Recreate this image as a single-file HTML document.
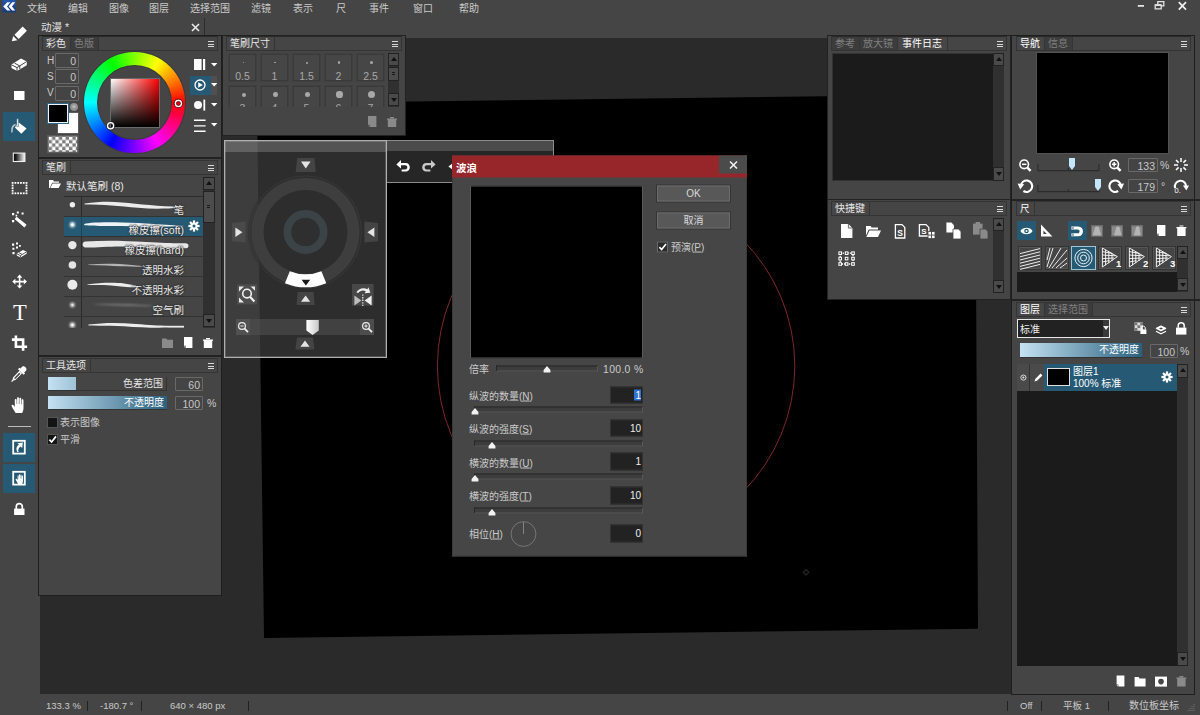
<!DOCTYPE html>
<html lang="zh-CN">
<head>
<meta charset="utf-8">
<title>动漫</title>
<style>
*{box-sizing:border-box;margin:0;padding:0}
html,body{width:1200px;height:715px;overflow:hidden;background:#2a2a2a}
body{font-family:"Liberation Sans","Noto Sans CJK SC",sans-serif;font-size:10px;color:#cacaca;line-height:1}
#app{position:relative;width:1200px;height:715px;overflow:hidden;background:#2a2a2a}
.a{position:absolute}
.t{position:absolute;white-space:nowrap;line-height:12px;font-size:10px}
.w{color:#fff}
.g{color:#8c8c8c}
.panel{position:absolute;background:#454545;border:1px solid #1e1e1e}
.hdr{position:absolute;height:15px;background:#454545;border:1px solid #343434}
.tab{position:absolute;top:0;bottom:0;display:flex;align-items:center;line-height:12px;font-size:10px;padding:0 4px 0 3px;border-right:1px solid #343434;color:#e8e8e8;background:#464646;white-space:nowrap}
.tab.off{color:#808080;background:#3c3c3c}
.hm{position:absolute;right:3px;bottom:2.6px;width:6.4px;height:6.4px;background:repeating-linear-gradient(to bottom,#d8d8d8 0,#d8d8d8 1.3px,transparent 1.3px,transparent 2.55px)}
.hm i{display:none}
.box{position:absolute;background:#444;border:1px solid #696969;border-radius:1px;color:#c8c8c8;text-align:right;font-size:10.5px;line-height:12px;padding-right:2px;padding-top:0.6px}
.sb{position:absolute;background:#3a3a3a}
.sbb{position:absolute;width:11px;height:13px;background:#4a4a4a;border:1px solid #222}
.sbb:after{content:"";position:absolute;left:1.5px;top:3px;border-left:3px solid transparent;border-right:3px solid transparent}
.sbb.up:after{border-bottom:4.5px solid #111}
.sbb.dn:after{border-top:4.5px solid #111;top:4px}
.cell{position:absolute;width:27px;height:27px;background:#464646;border:1px solid #3a3a3a;box-shadow:0 0 0 1px rgba(58,58,58,0.45)}
.cell i{position:absolute;border-radius:50%;background:#a8a8a8}
.cell b{position:absolute;left:0;width:25px;top:14.5px;text-align:center;font-weight:normal;font-size:10.5px;line-height:12px;color:#a8a8a8}
.btn{width:73px;height:15.5px;background:#585858;border:1px solid #6c6c6c;box-shadow:0 0 0 1px #333;text-align:center;font-size:10px;line-height:14px;color:#d8d8d8}
.inp{position:absolute;width:33px;height:17.5px;background:#222;border:1px solid #333;text-align:right;font-size:10px;line-height:13px;padding:1px 1px 0 0;color:#eee}
.trk{position:absolute;height:6px;background:#3d3d3d;border:1px solid #272727;border-bottom-color:#585858;border-right-color:#585858}
.blue{background:#265a74}
.bn{text-shadow:0 0 1px #333,0 0 2px #333,0 0 2px #333}
svg{position:absolute;overflow:visible}
</style>
</head>
<body>
<div id="app">

<!-- ===== canvas area ===== -->
<svg class="a" style="left:0;top:0" width="1200" height="715" viewBox="0 0 1200 715">
  <polygon points="257,103.4 975,94.4 978,628.7 264,638" fill="#000"/>
  <circle cx="616.1" cy="366" r="178.7" fill="none" stroke="#8a2c2c" stroke-width="0.9"/>
  <path d="M806 569.4 l2.9 2.8 l-2.9 2.8 l-2.9 -2.8 z" fill="none" stroke="#262626" stroke-width="1.1"/>
</svg>

<!-- ===== top menu ===== -->
<div class="a" id="menubar" style="left:0;top:0;width:1200px;height:38px;background:#454545">
  <svg style="left:0;top:0" width="18" height="14" viewBox="0 0 18 14"><defs><linearGradient id="lg" x1="0" x2="0" y1="0" y2="1"><stop offset="0" stop-color="#2458ae"/><stop offset="1" stop-color="#163a7c"/></linearGradient></defs><rect x="2.4" y="0" width="13.4" height="12.4" fill="url(#lg)"/><path d="M3.2 6.4L7.2 2.2H10.4L7 6.4L10.4 10.4H7.2Z M8.6 6.4L12.2 2.2H15.2L12 6.4L15.2 10.4H12.2Z" fill="#fff"/></svg>
  <span class="t" style="left:27px;top:3px">文档</span>
  <span class="t" style="left:68px;top:3px">编辑</span>
  <span class="t" style="left:109px;top:3px">图像</span>
  <span class="t" style="left:149px;top:3px">图层</span>
  <span class="t" style="left:190px;top:3px">选择范围</span>
  <span class="t" style="left:251px;top:3px">滤镜</span>
  <span class="t" style="left:293px;top:3px">表示</span>
  <span class="t" style="left:336px;top:3px">尺</span>
  <span class="t" style="left:369px;top:3px">事件</span>
  <span class="t" style="left:413px;top:3px">窗口</span>
  <span class="t" style="left:459px;top:3px">帮助</span>
  <svg style="left:1135px;top:0px" width="56" height="12" viewBox="1135 0 56 12">
    <rect x="1137.8" y="5" width="6.2" height="1.8" fill="#e0e0e0"/>
    <path d="M1155.2 4.8h6v4h-6z M1157.8 4.4v-2.8h6v4.2h-2.4" fill="none" stroke="#e4e4e4" stroke-width="1.3"/><path d="M1155.2 5.2h6" stroke="#e4e4e4" stroke-width="1.6"/>
    <path d="M1178.8 2.2l7.2 7.4M1186 2.2l-7.2 7.4" stroke="#f0f0f0" stroke-width="1.7"/>
  </svg>
</div>
<div class="a" id="doctab" style="left:38px;top:18px;width:167px;height:18px;border-right:1px solid #2c2c2c">
  <span class="t" style="left:3px;top:3px;font-size:10.5px;color:#e0e0e0">动漫 *</span>
  <svg style="left:153px;top:5px" width="9" height="9" viewBox="0 0 9 9"><path d="M1 1l7 7M8 1l-7 7" stroke="#e8e8e8" stroke-width="1.6"/></svg>
</div>

<!-- ===== left tool column ===== -->
<div class="a" id="toolcol" style="left:0;top:38px;width:39.5px;height:656px;background:#454545"></div>
<div class="a blue" style="left:3px;top:112px;width:32px;height:29px"></div>
<div class="a blue" style="left:3px;top:433px;width:32px;height:29px"></div>
<div class="a blue" style="left:3px;top:464px;width:32px;height:29px"></div>
<i class="a" style="left:8px;top:426px;width:23px;height:1px;background:#bbb"></i>
<svg id="tools" style="left:0;top:0" width="38" height="715" viewBox="0 0 38 715" fill="#fff">
  <!-- pen -->
  <path d="M14.5 34.7 L22.7 26.5 L26.9 30.7 L18.7 38.9Z"/><path d="M13.2 36 L17.4 40.2 L11.9 41.3Z"/>
  <!-- eraser -->
  <g transform="translate(19,64)"><path d="M-7.5 0.5 L2 -5.6 L7.8 -2.6 L7.8 1.2 L-2 7 L-7.5 4Z"/><path d="M-7.5 0.8 L-2 3.6 L7.6 -2.4 M-2 3.6 V7 M-4.6 -1 L0.8 2 L0.8 5" stroke="#454545" stroke-width="1" fill="none"/></g>
  <!-- rect -->
  <rect x="14" y="91" width="10.5" height="9"/>
  <!-- bucket -->
  <path d="M18.4 122.3 L26.6 128.4 L21.3 133.8 L14.9 127.5Z"/><path d="M16.8 118.8h1.7v7.8h-1.7z" stroke="#265a74" stroke-width="0.5"/><path d="M15.6 124.6 C12.6 125.4 11.6 127.6 12 132.4" fill="none" stroke="#b8c6ce" stroke-width="1.6"/>
  <!-- gradient -->
  <defs><linearGradient id="gbw" x1="0" x2="1" y1="0" y2="0"><stop offset="0" stop-color="#000"/><stop offset="0.25" stop-color="#222"/><stop offset="1" stop-color="#fff"/></linearGradient></defs>
  <rect x="13.3" y="153.1" width="11.6" height="8.4" fill="url(#gbw)" stroke="#f0f0f0" stroke-width="1.1"/>
  <!-- dotted select -->
  <rect x="11.70" y="182" width="1.8" height="1.8"/><rect x="11.70" y="192.4" width="1.8" height="1.8"/><rect x="14.48" y="182" width="1.8" height="1.8"/><rect x="14.48" y="192.4" width="1.8" height="1.8"/><rect x="17.26" y="182" width="1.8" height="1.8"/><rect x="17.26" y="192.4" width="1.8" height="1.8"/><rect x="20.04" y="182" width="1.8" height="1.8"/><rect x="20.04" y="192.4" width="1.8" height="1.8"/><rect x="22.82" y="182" width="1.8" height="1.8"/><rect x="22.82" y="192.4" width="1.8" height="1.8"/><rect x="25.60" y="182" width="1.8" height="1.8"/><rect x="25.60" y="192.4" width="1.8" height="1.8"/><rect x="11.7" y="184.60" width="1.8" height="1.8"/><rect x="25.6" y="184.60" width="1.8" height="1.8"/><rect x="11.7" y="187.20" width="1.8" height="1.8"/><rect x="25.6" y="187.20" width="1.8" height="1.8"/><rect x="11.7" y="189.80" width="1.8" height="1.8"/><rect x="25.6" y="189.80" width="1.8" height="1.8"/>
  <!-- magic wand -->
  <g transform="translate(19,219)"><path d="M-2.4 -2.2 L7.6 5.8 L5.4 8.4 L-4.4 0Z"/><path d="M-7 -6h2.2v2.2h-2.2z M-2.2 -7.6h2v2h-2z M2.6 -6.6h2v2h-2z M-7 1h2.2v2.2h-2.2z M-3.4 -4.2h1.6v1.6h-1.6z"/></g>
  <!-- select eraser -->
  <g transform="translate(19,250)"><path d="M-7 -6.4h2.2v2.2h-2.2z M-3 -7.6h2v2h-2z M-6.6 -2.2h2v2h-2z M-3 -3.4h2v2h-2z M-6.6 2h2.2v2.2h-2.2z M0 -5h1.8v1.8h-1.8z"/><path d="M-2.2 3.6 L4 0 L7.6 1.8 L7.6 3.8 L1.4 7.4 L-2.2 5.6Z"/><path d="M-2 3.8 L1.4 5.6 L7.4 2 M1.4 5.6V7.4 M0 2.6 L3 4.4" stroke="#454545" stroke-width="0.9" fill="none"/></g>
  <!-- move -->
  <g transform="translate(19.6,281.6)"><path d="M0 -7 L2.8 -3.8 H0.8 V-0.8 H4.2 V-2.8 L7.4 0 L4.2 2.8 V0.8 H0.8 V3.8 H2.8 L0 7 L-2.8 3.8 H-0.8 V0.8 H-4.2 V2.8 L-7.4 0 L-4.2 -2.8 V-0.8 H-0.8 V-3.8 H-2.8Z"/></g>
  <!-- T -->
  <text x="19.8" y="320" text-anchor="middle" font-family="Liberation Serif,serif" font-size="22.5" fill="#fff">T</text>
  <!-- crop -->
  <g transform="translate(19.5,343.2)" fill="none" stroke="#fff" stroke-width="2.6"><path d="M-3.6 -7.6 V3.6 H7.6 M-7.6 -3.6 H3.6 V7.6"/></g>
  <!-- eyedropper -->
  <g transform="translate(19,374)"><path d="M3.4 -7.4 C5.4 -8.6 8.4 -5.6 7.2 -3.6 L5.2 -1.6 L6 -0.6 L4.6 0.8 L-1 -4.8 L0.4 -6.2 L1.4 -5.4Z"/><path d="M0.4 -3.2 L3 -0.6 L-3.6 6 L-5.6 6.6 L-7 8 L-7.8 7.2 L-6.4 5.6 L-6 3.6Z M0.2 -1.2 L-4.6 3.8 L-4.4 5 L-3.4 4.8 L1.4 -0.2Z" fill-rule="evenodd"/></g>
  <!-- hand -->
  <g transform="translate(19,405)"><path d="M-3.4 8 C-4.6 5.4 -6.6 3.4 -7.4 1 C-7.6 -0.4 -6 -0.8 -5.2 0.4 L-4.2 2 V-5 C-4.2 -6.4 -2.4 -6.4 -2.4 -5 V-1 H-1.9 V-6.8 C-1.9 -8.2 -0.1 -8.2 -0.1 -6.8 V-1 H0.4 V-6.2 C0.4 -7.6 2.2 -7.6 2.2 -6.2 V-0.6 H2.7 V-4.6 C2.7 -6 4.5 -6 4.5 -4.6 V3 C4.5 5 3.8 6.4 3.2 8Z"/></g>
  <!-- shortcut doc icon -->
  <g transform="translate(19,447.2)"><rect x="-5.8" y="-6.4" width="11.6" height="12.8" fill="none" stroke="#fff" stroke-width="1.8"/><path d="M-1.6 4.8 C-3.4 2 -2.6 -1 0 -2.4 L-1.6 -4 L3.8 -4.6 L3.2 0.8 L1.6 -0.8 C-0.4 0.6 -1.4 2.4 -0.4 4.8Z"/></g>
  <!-- hand doc icon -->
  <g transform="translate(19,478.2)"><rect x="-5.8" y="-6.4" width="11.6" height="12.8" fill="none" stroke="#fff" stroke-width="1.8"/><g transform="translate(1.2,0.8) scale(0.62)"><path d="M-3.4 8 C-4.6 5.4 -6.6 3.4 -7.4 1 C-7.6 -0.4 -6 -0.8 -5.2 0.4 L-4.2 2 V-5 C-4.2 -6.4 -2.4 -6.4 -2.4 -5 V-1 H-1.9 V-6.8 C-1.9 -8.2 -0.1 -8.2 -0.1 -6.8 V-1 H0.4 V-6.2 C0.4 -7.6 2.2 -7.6 2.2 -6.2 V-0.6 H2.7 V-4.6 C2.7 -6 4.5 -6 4.5 -4.6 V3 C4.5 5 3.8 6.4 3.2 8Z"/></g></g>
  <!-- lock -->
  <g transform="translate(19.3,509)"><rect x="-5.2" y="-0.4" width="10.4" height="6.4"/><path d="M-3 0 V-2.4 C-3 -6.4 3 -6.4 3 -2.4 V0" fill="none" stroke="#fff" stroke-width="1.7"/></g>
</svg>

<div class="a" style="left:1195px;top:38px;width:5px;height:660px;background:#454545"></div>
<!-- ===== status bar ===== -->
<div class="a" id="status" style="left:0;top:694px;width:1200px;height:21px;background:#454545;font-size:9.5px">
  <span class="t" style="left:46px;top:6px;font-size:9.5px">133.3 %</span>
  <i class="a" style="left:87px;top:7px;width:1px;height:10px;background:#222"></i>
  <span class="t" style="left:100px;top:6px;font-size:9.5px">-180.7 °</span>
  <i class="a" style="left:141px;top:7px;width:1px;height:10px;background:#222"></i>
  <span class="t" style="left:170px;top:6px;font-size:9.5px">640 × 480 px</span>
  <i class="a" style="left:248px;top:7px;width:1px;height:10px;background:#222"></i>
  <i class="a" style="left:1007px;top:7px;width:1px;height:10px;background:#222"></i>
  <span class="t" style="left:1020px;top:6px;font-size:9.5px">Off</span>
  <i class="a" style="left:1041px;top:7px;width:1px;height:10px;background:#222"></i>
  <span class="t" style="left:1063px;top:6px;font-size:9.5px">平板 1</span>
  <i class="a" style="left:1108px;top:7px;width:1px;height:10px;background:#222"></i>
  <span class="t" style="left:1129px;top:6px;font-size:10px">数位板坐标</span>
  <svg style="left:1187px;top:9px" width="8" height="8" viewBox="0 0 8 8"><path d="M7 1v1M7 3v1M5 3v1M7 5v1M5 5v1M3 5v1M7 7v1M5 7v1M3 7v1M1 7v1" stroke="#777" stroke-width="1"/></svg>
</div>

<!-- ===== left docked panel ===== -->
<div class="panel" id="leftpanel" style="left:38px;top:35px;width:184px;height:561px">
 <!-- coordinates inside are relative to (39,36) -->
 <div class="hdr" style="left:3px;top:0px;width:176px;height:15px;border-top-color:#2a2a2a"><span class="tab" style="left:0">彩色</span><span class="tab off" style="left:28px">色版</span><span class="hm"><i></i><i></i><i></i></span></div>
 <span class="t" style="left:8px;top:19px;font-size:10px">H</span><div class="box" style="left:16px;top:17px;width:24px;height:15px;line-height:13px;padding-top:1px">0</div>
 <span class="t" style="left:8px;top:35px;font-size:10px">S</span><div class="box" style="left:16px;top:33px;width:24px;height:15px;line-height:13px;padding-top:1px">0</div>
 <span class="t" style="left:8px;top:51px;font-size:10px">V</span><div class="box" style="left:16px;top:49.5px;width:24px;height:15px;line-height:13px;padding-top:1px">0</div>
 <!-- swatches -->
 <div class="a" style="left:18px;top:76.3px;width:22px;height:21.4px;background:#fff;border:1.5px solid #5c5c5c"></div>
 <div class="a" style="left:9px;top:67.6px;width:20px;height:19.4px;background:#000;border:1px solid #eaf4fa;outline:1px solid #2f6787"></div>
 <div class="a" style="left:31px;top:66.6px;width:8.4px;height:8.4px;border-radius:50%;background:radial-gradient(circle at 50% 45%,#c8c8c8 0,#9a9a9a 35%,#777 100%)"></div>
 <svg style="left:8px;top:98.8px" width="32" height="19" viewBox="0 0 32 19"><defs><pattern id="chk" x="1.6" y="1.6" width="6.8" height="6.8" patternUnits="userSpaceOnUse"><rect width="6.8" height="6.8" fill="#fff"/><rect x="3.4" width="3.4" height="3.4" fill="#7c7c7c"/><rect y="3.4" width="3.4" height="3.4" fill="#7c7c7c"/></pattern></defs><rect x="0.85" y="0.85" width="30.1" height="16.6" fill="url(#chk)" stroke="#5c5c5c" stroke-width="1.5"/></svg>
 <!-- colour wheel -->
 <div class="a" style="left:45px;top:16px;width:101px;height:101px;border-radius:50%;background:conic-gradient(from 90deg,#ff0000,#ff00ff,#0000ff,#00ffff,#00ff00,#ffff00,#ff0000);box-shadow:0 0 0 1px #3a3a3a"></div>
 <div class="a" style="left:59px;top:30px;width:73px;height:73px;border-radius:50%;background:#454545;box-shadow:0 0 0 1px #3a3a3a"></div>
 <div class="a" style="left:70.5px;top:42px;width:50px;height:49.5px;border:1px solid #6a6a6a;background:linear-gradient(to bottom,rgba(0,0,0,0),#000),linear-gradient(to right,#fff,#f00)"></div>
 <svg style="left:0;top:0" width="184" height="130" viewBox="0 0 184 130"><g fill="none"><circle cx="139.4" cy="67.4" r="3.1" stroke="#fff" stroke-width="1.7"/><circle cx="139.4" cy="67.4" r="4.3" stroke="#222" stroke-width="0.8"/><circle cx="139.4" cy="67.4" r="1.9" stroke="#222" stroke-width="0.7"/><circle cx="71.6" cy="89.8" r="3.1" stroke="#fff" stroke-width="1.7"/><circle cx="71.6" cy="89.8" r="4.3" stroke="#222" stroke-width="0.8"/><circle cx="71.6" cy="89.8" r="1.9" stroke="#222" stroke-width="0.7"/></g></svg>
 <!-- right icon column -->
 <div class="a blue" style="left:151px;top:40px;width:21px;height:19px"></div><div class="a" style="left:172px;top:40px;width:6px;height:19px;background:#505050"></div>
 <svg style="left:150px;top:20px" width="32" height="80" viewBox="0 0 32 80" fill="#fff">
   <rect x="5" y="3" width="7.6" height="11"/><rect x="14" y="3" width="2.2" height="11"/><path d="M22 7h6.4l-3.2 3.4z"/>
   <circle cx="11" cy="29" r="5" fill="none" stroke="#fff" stroke-width="1.3"/><path d="M9.2 26.2l4.6 2.8l-4.6 2.8z"/><path d="M22 27h6.4l-3.2 3.4z"/>
   <circle cx="9" cy="49" r="4"/><rect x="14.4" y="43.6" width="1.8" height="11"/><path d="M22 47h6.4l-3.2 3.4z"/>
   <path d="M5 63.6h11.6v1.3h-11.6z M5 69.2h11.6v1.3h-11.6z M5 74.6h11.6v1.3h-11.6z"/><path d="M22 67h6.4l-3.2 3.4z"/>
 </svg>

 <!-- ===== brush panel ===== -->
 <i class="a" style="left:0;top:121px;width:182px;height:2px;background:#222"></i>
 <div class="hdr" style="left:3px;top:124px;width:176px"><span class="tab" style="left:0">笔刷</span><span class="hm"><i></i><i></i><i></i></span></div>
 <svg style="left:10px;top:143px" width="12" height="10" viewBox="0 0 12 10"><path d="M0 1h4l1 1.4h5v1.4H3.2L0.8 9H0z" fill="#fff"/><path d="M3.6 4.6H12L9.6 9H1.4z" fill="#fff"/></svg>
 <span class="t" style="left:27px;top:144px;font-size:10.5px;color:#e8e8e8">默认笔刷 (8)</span>
 <div class="a" id="brushlist" style="left:25px;top:160px;width:140px;height:132px;overflow:hidden">
   <i class="a" style="left:17px;top:0;width:1px;height:132px;background:#2a2a2a"></i>
   <i class="a" style="left:-20px;top:0;width:160px;height:1px;background:#2c2c2c"></i>
   <i class="a" style="left:0;top:20px;width:140px;height:1px;background:#333"></i>
   <div class="a blue" style="left:0;top:21px;width:140px;height:19px"></div>
   <i class="a" style="left:17px;top:21px;width:1px;height:19px;background:#1d4558"></i>
   <i class="a" style="left:0;top:40px;width:140px;height:1px;background:#333"></i>
   <i class="a" style="left:0;top:60px;width:140px;height:1px;background:#333"></i>
   <i class="a" style="left:0;top:80px;width:140px;height:1px;background:#333"></i>
   <i class="a" style="left:0;top:100px;width:140px;height:1px;background:#333"></i>
   <i class="a" style="left:0;top:120px;width:140px;height:1px;background:#333"></i>
   <svg style="left:0;top:0" width="140" height="132" viewBox="0 0 140 132">
     <defs><filter id="bl1" x="-50%" y="-50%" width="200%" height="200%"><feGaussianBlur stdDeviation="0.9"/></filter><filter id="bl2" x="-50%" y="-50%" width="200%" height="200%"><feGaussianBlur stdDeviation="0.5"/></filter></defs>
     <circle cx="8.4" cy="8.8" r="2.7" fill="#eee"/>
     <path d="M20.6 7.4 C35 5.6 45 5.2 58 6.4 C75 8 95 10.2 117 10.7 L117 11.5 C100 13 88 13 74 11.8 C55 10 40 8.6 20.6 8.5Z" fill="#ececec"/>
     <circle cx="8.4" cy="28.7" r="2.6" fill="#eef6fa" filter="url(#bl1)"/><circle cx="8.4" cy="28.7" r="1.2" fill="#fff"/>
     <path d="M20 28.6 C20 26.4 40 25.8 58 26.4 C80 27 100 28.4 121 30 C100 31 80 30.8 58 30 C40 29.6 20 30.6 20 28.6Z" fill="#edf3f7" filter="url(#bl2)"/>
     <circle cx="8.4" cy="49.1" r="4.2" fill="#e8e8e8"/>
     <path d="M21.4 45.6 C40 44 60 44.6 82 46 C100 47 112 47.4 121.6 47.2 C125.4 47.2 125.6 52 122 52.2 C100 52.6 80 50.6 60 50.4 C45 50.2 35 51.4 21.6 51.6 C17.8 51.6 17.6 46 21.4 45.6Z" fill="#e8e8e8"/>
     <circle cx="8.4" cy="69" r="3.8" fill="#e4e4e4"/>
     <path d="M24.4 68.4 C40 67.2 55 67.6 68 69 C74 69.6 78 70.2 81 70.6 C70 71 55 69.8 24.4 68.9Z" fill="#b4b4b4" filter="url(#bl2)"/>
     <circle cx="8.4" cy="88.8" r="5" fill="#eaeaea"/>
     <path d="M23.4 88.6 C35 86.6 50 86.4 60 87.4 L72 89.4 L72 91.4 C60 91.6 50 89.4 40 89 C33 88.8 28 89 23.4 88.9Z" fill="#ececec"/>
     <circle cx="8.4" cy="109" r="2.4" fill="#ddd" filter="url(#bl1)"/><circle cx="8.4" cy="109" r="1" fill="#e8e8e8"/>
     <path d="M30 108.4 C50 107.4 75 108.6 92 110 C75 110.6 50 109.2 30 108.8Z" fill="#8a8a8a" filter="url(#bl1)"/>
     <circle cx="8.4" cy="129" r="2.7" fill="#e4e4e4" filter="url(#bl1)"/><circle cx="8.4" cy="129" r="1.3" fill="#f4f4f4"/>
     <path d="M24.4 128.6 C40 126.6 55 126.6 72 128 C85 129 95 129.6 104 129.8 L104 131.6 C90 132 75 131.4 60 130.2 C45 129.4 35 129.8 24.4 129.6Z" fill="#ececec"/>
     <path d="M104 129.8h16v1.8h-16z" fill="#ececec" stroke="#454545" stroke-width="0" stroke-dasharray="2 1"/>
   </svg>
   <span class="t bn" style="right:20px;top:8px;font-size:10.5px;color:#e8e8e8">笔</span>
   <span class="t bn" style="right:20px;top:28px;font-size:10.5px;color:#f0f0f0">橡皮擦(soft)</span>
   <span class="t bn" style="right:20px;top:48px;font-size:10.5px;color:#e8e8e8">橡皮擦(hard)</span>
   <span class="t bn" style="right:20px;top:68px;font-size:10.5px;color:#e8e8e8">透明水彩</span>
   <span class="t bn" style="right:20px;top:88px;font-size:10.5px;color:#e8e8e8">不透明水彩</span>
   <span class="t bn" style="right:20px;top:108px;font-size:10.5px;color:#e8e8e8">空气刷</span>
   <svg style="left:124px;top:24px" width="12" height="12" viewBox="-6 -6 12 12"><g fill="#fff"><circle r="3.6"/><g id="gt"><rect x="-1.1" y="-5.6" width="2.2" height="11.2"/></g><use href="#gt" transform="rotate(45)"/><use href="#gt" transform="rotate(90)"/><use href="#gt" transform="rotate(135)"/></g><circle r="1.5" fill="#265a74"/></svg>
 </div>
 <div class="sb" style="left:164px;top:141px;width:12px;height:151px;background:#303030"></div>
 <div class="sbb up" style="left:164px;top:141px;width:12px"></div>
 <div class="a" style="left:164px;top:155px;width:12px;height:32px;background:#4c4c4c;border:1px solid #222"><i class="a" style="left:3px;top:13px;width:3px;height:1px;background:#1a1a1a"></i><i class="a" style="left:3px;top:15px;width:3px;height:1px;background:#1a1a1a"></i></div>
 <div class="sbb dn" style="left:164px;top:278px;width:12px"></div>
 <svg style="left:122px;top:300px" width="56" height="14" viewBox="0 0 56 14">
   <path d="M1 2.4h4.4l1 1.4H12V12H1z" fill="#8a8a8a"/>
   <path d="M23 1h8.4v11h-6.6v-2.2H23z" fill="#fff"/><path d="M23 10.6h1.4V12z" fill="#fff"/>
   <path d="M42 3.6h10v1.2h-0.8V12H42.8V4.8H42z M45 2h4v1.2h-4z" fill="#fff"/>
 </svg>

 <!-- ===== tool options ===== -->
 <i class="a" style="left:0;top:319px;width:182px;height:2px;background:#222"></i>
 <div class="hdr" style="left:3px;top:322px;width:176px"><span class="tab" style="left:0">工具选项</span><span class="hm"><i></i><i></i><i></i></span></div>
 <div class="a" style="left:9px;top:341px;width:119px;height:14px;background:#454545;border-bottom:1px solid #333;border-right:1px solid #333"><i class="a" style="left:0;top:0;width:28px;height:13px;background:linear-gradient(to right,#c4e2f2,#9fc2d6)"></i><span class="t" style="right:3px;top:1px;font-size:10px;color:#e4e4e4">色差范围</span></div>
 <div class="box" style="left:136px;top:341px;width:28px;height:14px">60</div>
 <div class="a" style="left:9px;top:360px;width:119px;height:14px;background:linear-gradient(to right,#c4e2f2,#2a607e);border-bottom:1px solid #333"><span class="t" style="right:3px;top:1px;font-size:10px;color:#fff">不透明度</span></div>
 <div class="box" style="left:136px;top:360px;width:28px;height:14px">100</div>
 <span class="t" style="left:168px;top:361px;font-size:10.5px">%</span>
 <div class="a" style="left:8px;top:381px;width:11px;height:11px;background:#141414;border:1px solid #555"></div>
 <span class="t" style="left:21px;top:381px;font-size:10px">表示图像</span>
 <div class="a" style="left:8px;top:398px;width:11px;height:11px;background:#141414;border:1px solid #555"><svg style="left:0;top:0" width="9" height="9" viewBox="0 0 9 9"><path d="M1.4 4.6l2.2 2.4L8 1.4" stroke="#fff" stroke-width="1.7" fill="none"/></svg></div>
 <span class="t" style="left:21px;top:398px;font-size:10px">平滑</span>
</div>

<!-- ===== brush size floating panel ===== -->
<div class="panel" id="bsize" style="left:222px;top:35px;width:184px;height:101px;border-color:#222">
 <!-- inner origin (223,36) -->
 <div class="hdr" style="left:3px;top:0px;width:176px;height:15px;border-top-color:#2a2a2a"><span class="tab" style="left:0">笔刷尺寸</span><span class="hm"><i></i><i></i><i></i></span></div>
 <div class="a" style="left:4px;top:17px;width:161px;height:54px;overflow:hidden;color:#a8a8a8;font-size:10.5px">
   <div class="cell" style="left:2px;top:1px"><i style="width:1px;height:1px;top:7px;left:12.5px"></i><b>0.5</b></div>
   <div class="cell" style="left:34px;top:1px"><i style="width:1.6px;height:1.6px;top:6.7px;left:12.2px"></i><b>1</b></div>
   <div class="cell" style="left:66px;top:1px"><i style="width:2px;height:2px;top:6.5px;left:12px"></i><b>1.5</b></div>
   <div class="cell" style="left:98px;top:1px"><i style="width:2.6px;height:2.6px;top:6.2px;left:11.7px"></i><b>2</b></div>
   <div class="cell" style="left:130px;top:1px"><i style="width:3px;height:3px;top:6px;left:11.5px"></i><b>2.5</b></div>
   <div class="cell" style="left:2px;top:33px"><i style="width:4px;height:4px;top:5.5px;left:11.5px"></i><b>3</b></div>
   <div class="cell" style="left:34px;top:33px"><i style="width:4.6px;height:4.6px;top:5.2px;left:11.2px"></i><b>4</b></div>
   <div class="cell" style="left:66px;top:33px"><i style="width:5.4px;height:5.4px;top:4.8px;left:10.8px"></i><b>5</b></div>
   <div class="cell" style="left:98px;top:33px"><i style="width:6.2px;height:6.2px;top:4.4px;left:10.4px"></i><b>6</b></div>
   <div class="cell" style="left:130px;top:33px"><i style="width:7px;height:7px;top:4px;left:10px"></i><b>7</b></div>
 </div>
 <div class="sb" style="left:165px;top:17px;width:11px;height:54px;background:#303030"></div>
 <div class="sbb up" style="left:165px;top:17px"></div>
 <div class="a" style="left:165px;top:31px;width:11px;height:14px;background:#4c4c4c;border:1px solid #222"><i class="a" style="left:3px;top:4px;width:3px;height:1px;background:#1a1a1a"></i><i class="a" style="left:3px;top:6px;width:3px;height:1px;background:#1a1a1a"></i></div>
 <div class="sbb dn" style="left:165px;top:57px"></div>
 <svg style="left:144px;top:79px" width="34" height="14" viewBox="0 0 34 14">
   <path d="M1 1h8.4v11h-6.6v-2.2H1z" fill="#8a8a8a"/><path d="M1 10.6h1.4V12z" fill="#8a8a8a"/>
   <path d="M20 3.6h10v1.2h-0.8V12H20.8V4.8H20z M23 2h4v1.2h-4z" fill="#8a8a8a"/>
 </svg>
</div>

<!-- ===== navigator overlay ===== -->
<div class="a" id="navov" style="left:224px;top:140px;width:163px;height:218px;background:rgba(72,72,72,0.62);border:1px solid #b0b0b0;box-shadow:inset 0 0 0 1px rgba(170,170,170,0.3)">
 <div class="a" style="left:0;top:0;width:161px;height:10.6px;background:rgba(255,255,255,0.19)"></div>
 <svg style="left:-1px;top:-1px" width="163" height="218" viewBox="224 140 163 218">
   <defs><linearGradient id="thg" x1="0" x2="1"><stop offset="0" stop-color="#fff"/><stop offset="1" stop-color="#c8c8c8"/></linearGradient></defs>
   <!-- dial -->
   <circle cx="305.5" cy="232" r="57.5" fill="rgba(46,46,46,0.6)"/><circle cx="305.5" cy="232" r="56" fill="none" stroke="rgba(70,70,70,0.5)" stroke-width="0.8"/>
   <circle cx="305.5" cy="232" r="54" fill="#3e3e3e"/>
   <circle cx="305.5" cy="232" r="42" fill="#2d2d2d"/>
   <circle cx="305.5" cy="232" r="18" fill="none" stroke="#3b4347" stroke-width="8"/>
   <circle cx="305.5" cy="232" r="14" fill="#2f2f2f"/>
   <!-- arrow buttons -->
   <path d="M297.2 158H314.4L315.8 172H295.6Z" fill="rgba(84,84,84,0.6)"/><path d="M301 161.4h9.6l-4.8 7z" fill="#e4e4e4"/>
   <path d="M232 223l13.6 -1.4v21l-13.6 -1.4z" fill="rgba(84,84,84,0.6)"/><path d="M235.4 227.4l7 4.8l-7 4.8z" fill="#e4e4e4"/>
   <path d="M378 223l-13.6 -1.4v21l13.6 -1.4z" fill="rgba(84,84,84,0.6)"/><path d="M374.4 227.4l-7 4.8l7 4.8z" fill="#e4e4e4"/>
   <!-- white arc -->
   <path d="M289.79 271.13 A42.2 42.2 0 0 0 321.41 271.13 L326.28 283.18 A55.2 55.2 0 0 1 284.92 283.18 Z" fill="#fff"/>
   <path d="M301.6 279.8h8.6l-4.3 5.8z" fill="#1a1a1a"/>
   <path d="M297.6 292h16l1 13h-18z" fill="rgba(84,84,84,0.6)"/><path d="M305.6 295.4l4.6 6.4h-9.2z" fill="#e4e4e4"/>
   <!-- zoom fit icon -->
   <rect x="237" y="284.4" width="20" height="20" fill="rgba(90,90,90,0.6)"/>
   <path d="M239 286.4h5l-5 5z M255 286.4h-4.4l4.4 4.4z M239 302.4h5l-5 -5z" fill="#e8e8e8"/>
   <circle cx="247" cy="293.6" r="4.3" fill="none" stroke="#f0f0f0" stroke-width="1.6"/><path d="M250.2 297l4.2 4.6" stroke="#f0f0f0" stroke-width="2.2"/>
   <!-- flip icon -->
   <rect x="352" y="284" width="21.6" height="21.6" fill="rgba(90,90,90,0.6)"/>
   <path d="M354.4 295.6l7 5l-7 5z" fill="#bdbdbd"/><path d="M371.6 295.6l-7 5l7 5z" fill="#f0f0f0"/>
   <path d="M362.8 294.4v11.6" stroke="#f0f0f0" stroke-width="1.2" stroke-dasharray="1.4 1.2"/>
   <path d="M356.4 292.6c1.6-4 7-5.6 11-3.4l1-2l2 5.6l-5.8 0.4l1.2-2c-2.8-1.4-6-0.6-7.6 1.8z" fill="#f0f0f0"/>
   <!-- zoom slider -->
   <rect x="236" y="319" width="138" height="16" fill="rgba(82,82,82,0.55)"/>
   <rect x="236" y="319" width="14" height="16" fill="rgba(90,90,90,0.5)"/><rect x="360" y="319" width="14" height="16" fill="rgba(90,90,90,0.5)"/>
   <circle cx="242" cy="326" r="3.4" fill="none" stroke="#eee" stroke-width="1.2"/><path d="M240.4 326h3.2" stroke="#eee" stroke-width="1"/><path d="M244.6 328.6l3.4 3.6" stroke="#eee" stroke-width="1.8"/>
   <circle cx="366" cy="326" r="3.4" fill="none" stroke="#eee" stroke-width="1.2"/><path d="M364.4 326h3.2M366 324.4v3.2" stroke="#eee" stroke-width="1"/><path d="M368.6 328.6l3.4 3.6" stroke="#eee" stroke-width="1.8"/>
   <path d="M306.4 320h12.4v10.4l-6.2 4.6l-6.2 -4.6z" fill="url(#thg)"/>
   <path d="M297 337.6h16l1.4 12h-19z" fill="rgba(84,84,84,0.6)"/><path d="M305 340.4l4.6 6.4h-9.2z" fill="#e4e4e4"/>
 </svg>
</div>

<!-- ===== undo/redo floating bar ===== -->
<div class="a" id="undobar" style="left:387px;top:140px;width:167px;height:43px;background:rgba(42,42,42,0.9);border:1px solid #8c8c8c;border-left:none">
 <div class="a" style="left:0;top:0;width:166px;height:10px;background:#4b4b4b"></div>
 <svg style="left:0;top:0" width="166" height="42" viewBox="387 141 166 42">
   <path d="M396.4 164.4l4.6 -4.4v3h4.6c5.6 0 5.6 8.6 0 8.6h-4v-2.2h3.6c2.8 0 2.8 -4.2 0 -4.2h-4.2v3.4z" fill="#fff"/>
   <path d="M435.6 164.4l-4.6 -4.4v3h-4.6c-5.6 0 -5.6 8.6 0 8.6h4v-2.2h-3.6c-2.8 0 -2.8 -4.2 0 -4.2h4.2v3.4z" fill="#c8c8c8"/>
   <path d="M448.4 166.4l4 -3v6z" fill="#fff"/>
 </svg>
</div>

<!-- ===== wave dialog ===== -->
<div class="a" id="dlg" style="left:452px;top:155px;transform:translateY(0.5px);width:295px;height:401px;background:#464646;border:1px solid #3a3a3a;border-top:none">
 <div class="a" style="left:-1px;top:0;width:295px;height:22px;background:#97262a"></div>
 <span class="t" style="left:3px;top:6px;font-size:10.5px;font-weight:bold;color:#fff">波浪</span>
 <div class="a" style="left:266px;top:0;width:28px;height:18px;background:#4b4b4b"><svg style="left:10px;top:5px" width="9" height="9" viewBox="0 0 9 9"><path d="M1 1l7 7M8 1l-7 7" stroke="#f4f4f4" stroke-width="1.5"/></svg></div>
 <div class="a" style="left:17px;top:30px;width:173px;height:173px;background:#000;border:1px solid #5a5a5a"></div>
 <div class="a btn" style="left:204px;top:30px">OK</div>
 <div class="a btn" style="left:204px;top:57px">取消</div>
 <div class="a" style="left:204px;top:86px;width:11px;height:11px;background:#2a2a2a;border:1px solid #6a6a6a"><svg style="left:0;top:0" width="9" height="9" viewBox="0 0 9 9"><path d="M1.4 4.6l2.2 2.4L8 1.4" stroke="#fff" stroke-width="1.6" fill="none"/></svg></div>
 <span class="t" style="left:218px;top:86px;font-size:10px">预演(<u>P</u>)</span>

 <span class="t" style="left:16px;top:208px;font-size:10px">倍率</span>
 <div class="trk" style="left:43px;top:210px;width:102px"></div>
 <svg style="left:90px;top:210px" width="8" height="8" viewBox="0 0 8 8"><path d="M4 0.6L7.4 4.4V7H0.6V4.4Z" fill="#f2f2f2"/></svg>
 <span class="t" style="left:150px;top:208px;font-size:10.4px;letter-spacing:0.35px">100.0 %</span>

 <span class="t" style="left:16px;top:235px;font-size:10px">纵波的数量(<u>N</u>)</span>
 <div class="inp" style="left:157px;top:230.6px"><span style="background:#2f74d0;color:#fff;padding-left:1px">1</span></div>
 <div class="trk" style="left:21px;top:251px;width:169px"></div>
 <svg style="left:17.6px;top:252px" width="8" height="8" viewBox="0 0 8 8"><path d="M4 0.6L7.4 4.4V7H0.6V4.4Z" fill="#f2f2f2"/></svg>

 <span class="t" style="left:16px;top:268px;font-size:10px">纵波的强度(<u>S</u>)</span>
 <div class="inp" style="left:157px;top:263.7px">10</div>
 <div class="trk" style="left:21px;top:285px;width:169px"></div>
 <svg style="left:34.6px;top:286px" width="8" height="8" viewBox="0 0 8 8"><path d="M4 0.6L7.4 4.4V7H0.6V4.4Z" fill="#f2f2f2"/></svg>

 <span class="t" style="left:16px;top:302px;font-size:10px">横波的数量(<u>U</u>)</span>
 <div class="inp" style="left:157px;top:297px">1</div>
 <div class="trk" style="left:21px;top:318px;width:169px"></div>
 <svg style="left:17.6px;top:319px" width="8" height="8" viewBox="0 0 8 8"><path d="M4 0.6L7.4 4.4V7H0.6V4.4Z" fill="#f2f2f2"/></svg>

 <span class="t" style="left:16px;top:335px;font-size:10px">横波的强度(<u>T</u>)</span>
 <div class="inp" style="left:157px;top:331px">10</div>
 <div class="trk" style="left:21px;top:352px;width:169px"></div>
 <svg style="left:34.6px;top:353px" width="8" height="8" viewBox="0 0 8 8"><path d="M4 0.6L7.4 4.4V7H0.6V4.4Z" fill="#f2f2f2"/></svg>

 <span class="t" style="left:16px;top:373px;font-size:10px">相位(<u>H</u>)</span>
 <svg style="left:57px;top:365px" width="27" height="27" viewBox="0 0 27 27"><circle cx="13.5" cy="13.5" r="12.4" fill="none" stroke="#7a7a7a" stroke-width="0.9"/><path d="M13.5 13.5V1.4" stroke="#8a8a8a" stroke-width="0.9"/></svg>
 <div class="inp" style="left:157px;top:369px">0</div>
</div>

<!-- ===== floating: reference / log ===== -->
<div class="panel" id="refp" style="left:827px;top:35px;width:184px;height:165px;border-color:#222">
 <!-- inner origin (828,36) -->
 <div class="hdr" style="left:3px;top:0px;width:176px;height:15px;border-top-color:#2a2a2a"><span class="tab off" style="left:0">参考</span><span class="tab off" style="left:28px">放大镜</span><span class="tab" style="left:66px;color:#fff;padding:0 5px 0 4px">事件日志</span><span class="hm"><i></i><i></i><i></i></span></div>
 <div class="a" style="left:4px;top:17px;width:172px;height:128px;background:#1b1b1b;border:1px solid #333"></div>
 <div class="sb" style="left:165px;top:17px;width:11px;height:128px;background:#303030"></div>
 <div class="sbb up" style="left:165px;top:17px"></div>
 <div class="sbb dn" style="left:165px;top:131px;height:14px"></div>
</div>
<div class="panel" id="keyp" style="left:827px;top:199px;width:184px;height:101px;border-color:#222">
 <!-- inner origin (828,200) -->
 <div class="hdr" style="left:3px;top:1px;width:176px"><span class="tab" style="left:0">快捷键</span><span class="hm"><i></i><i></i><i></i></span></div>
 <svg style="left:0;top:0" width="182" height="99" viewBox="828 200 182 99" fill="#fff">
   <!-- new doc -->
   <path d="M841 224h7.4l4 4v10h-11.4z"/><path d="M848.4 224v4h4" fill="none" stroke="#454545" stroke-width="0.8"/>
   <!-- open -->
   <path d="M866 226h4.6l1 1.6h6.4v2h-9.2l-2.8 6z"/><path d="M869.4 230.6h11.6l-3 6.4h-11.6z"/>
   <!-- S doc -->
   <path d="M895.4 224.6h6.6l2.8 2.8v10.6h-9.4z" fill="none" stroke="#fff" stroke-width="1.3"/><text x="900.2" y="235.6" font-size="8.5" font-weight="bold" text-anchor="middle" font-family="Liberation Sans,sans-serif">S</text>
   <!-- S doc + grid -->
   <path d="M919.4 224.6h6.6l2.8 2.8v8.6h-9.4z" fill="none" stroke="#fff" stroke-width="1.3"/><text x="924" y="233.6" font-size="8" font-weight="bold" text-anchor="middle" font-family="Liberation Sans,sans-serif">S</text>
   <rect x="928" y="231.6" width="7" height="7" fill="#fff" stroke="#454545" stroke-width="0.8"/><path d="M931.5 231.6v7M928 235.1h7" stroke="#454545" stroke-width="0.9"/>
   <!-- copy -->
   <path d="M946.4 222.6h5l2.6 2.6v7.4h-7.6z"/><path d="M953 229h5.4l2.6 2.6v7.4h-8z" stroke="#454545" stroke-width="0.8"/>
   <!-- paste grey -->
   <g fill="#8a8a8a"><path d="M973 223.6h9.6v11h-9.6z"/><path d="M975.6 222h4.4v2.4h-4.4z"/><path d="M980 229h5.4l2.6 2.6v7.4h-8z" stroke="#454545" stroke-width="0.8"/></g>
   <!-- selection icon -->
   <rect x="840.2" y="253.2" width="12.8" height="10.8" fill="none" stroke="#fff" stroke-width="1.3" stroke-dasharray="1.4 1"/>
   <g fill="#454545" stroke="#fff" stroke-width="1"><rect x="838.9" y="251.9" width="2.6" height="2.6"/><rect x="845.3" y="251.9" width="2.6" height="2.6"/><rect x="851.7" y="251.9" width="2.6" height="2.6"/><rect x="838.9" y="257.3" width="2.6" height="2.6"/><rect x="851.7" y="257.3" width="2.6" height="2.6"/><rect x="838.9" y="262.7" width="2.6" height="2.6"/><rect x="845.3" y="262.7" width="2.6" height="2.6"/><rect x="851.7" y="262.7" width="2.6" height="2.6"/><rect x="845.3" y="257.3" width="2.6" height="2.6"/></g>
 </svg>
 <div class="sb" style="left:165px;top:18px;width:11px;height:75px;background:#303030"></div>
 <div class="sbb up" style="left:165px;top:18px"></div>
 <div class="sbb dn" style="left:165px;top:80px"></div>
</div>

<!-- ===== right docked column ===== -->
<div class="panel" id="rightcol" style="left:1011px;top:35px;width:184px;height:660px">
 <!-- inner origin (1012,36) -->
 <div class="hdr" style="left:4px;top:0px;width:175px;height:15px;border-top-color:#2a2a2a"><span class="tab" style="left:0;color:#fff">导航</span><span class="tab off" style="left:28px">信息</span><span class="hm"><i></i><i></i><i></i></span></div>
 <div class="a" style="left:24px;top:16px;width:133px;height:102px;background:#000;border:1px solid #525252"></div>
 <svg style="left:0;top:118px" width="188" height="44" viewBox="1012 154 188 44" fill="#fff">
   <!-- zoom out -->
   <circle cx="1024.2" cy="164.3" r="4.3" fill="none" stroke="#fff" stroke-width="1.6"/><path d="M1022 164.3h4.4" stroke="#fff" stroke-width="1.5"/><path d="M1027.4 167.6l3.2 3.2" stroke="#fff" stroke-width="2.5"/>
   <path d="M1037.9 164v6.6h61v-6.6M1068.4 168v2.6" fill="none" stroke="#2c2c2c" stroke-width="1.1"/>
   <path d="M1069 158h6v8l-3 4l-3-4z" fill="#c4e6f8"/>
   <circle cx="1114.2" cy="164.3" r="4.3" fill="none" stroke="#fff" stroke-width="1.6"/><path d="M1112 164.3h4.4M1114.2 162.1v4.4" stroke="#fff" stroke-width="1.5"/><path d="M1117.4 167.6l3.2 3.2" stroke="#fff" stroke-width="2.5"/>
   <!-- burst -->
   <g stroke="#fff" stroke-width="1.5" transform="translate(1181,165)"><path d="M0 -7v4M0 7v-4M-7 0h4M7 0h-4M-5 -5l2.6 2.6M5 5l-2.6 -2.6M-5 5l2.6 -2.6M5 -5l-2.6 2.6"/></g>
   <!-- rotate left -->
   <path d="M1020.8 186a5.7 5.7 0 1 1 2.6 5" fill="none" stroke="#fff" stroke-width="2.1"/><path d="M1017.6 183.6l6.6 0.6l-4 5.4z"/>
   <path d="M1037.9 185v6.6h61v-6.6M1068.4 189v2.6" fill="none" stroke="#2c2c2c" stroke-width="1.1"/>
   <path d="M1095 179h6v8l-3 4l-3-4z" fill="#c4e6f8"/>
   <!-- rotate right -->
   <path d="M1120.8 186a5.7 5.7 0 1 0 -2.6 5" fill="none" stroke="#fff" stroke-width="2.1"/><path d="M1124 183.6l-6.6 0.6l4 5.4z"/>
   <!-- reset rotate -->
   <path d="M1175.2 188.2a5.6 5.6 0 1 1 10.8 -1" fill="none" stroke="#fff" stroke-width="2.1"/><path d="M1189 185.4l-6 0.2l3.4 5z"/><text x="1174.6" y="193.4" font-size="7.5" font-family="Liberation Sans,sans-serif">0.</text>
 </svg>
 <div class="box" style="left:116px;top:122px;width:30px;height:14px">133</div><span class="t" style="left:148px;top:123px;font-size:10.5px">%</span>
 <div class="box" style="left:116px;top:143px;width:30px;height:14px">179</div><span class="t" style="left:149px;top:144px;font-size:10.5px">°</span>

 <!-- ruler panel -->
 <i class="a" style="left:0;top:163px;width:188px;height:2px;background:#222"></i>
 <div class="hdr" style="left:4px;top:165px;width:175px"><span class="tab" style="left:0;color:#fff;font-size:9.5px">尺</span><span class="hm"><i></i><i></i><i></i></span></div>
 <div class="a blue" style="left:5px;top:185px;width:19px;height:18.5px"></div>
 <div class="a blue" style="left:56px;top:185px;width:18.5px;height:18.5px"></div>
 <svg style="left:0;top:183px" width="188" height="24" viewBox="1012 218 188 24" fill="#fff">
   <path d="M1020.4 230c2.4-4.4 9.8-4.4 12.2 0c-2.4 4.4-9.8 4.4-12.2 0z"/><circle cx="1026.5" cy="230" r="2.3" fill="#265a74"/><circle cx="1026.5" cy="230" r="1" />
   <path d="M1041 223.6v11.8h11.4z M1043.4 229.6v3.4h3.4z" fill-rule="evenodd"/>
   <path d="M1071.4 225.4h6.8c6.4 0 6.4 9.8 0 9.8h-6.8v-3h6.4c2.4 0 2.4-3.8 0-3.8h-6.4z"/><path d="M1071.4 225.4h2.6v3h-2.6z M1071.4 232.2h2.6v3h-2.6z" fill="#9ab"/>
   <g fill="#8a8a8a"><rect x="1091" y="224.4" width="12" height="11"/><rect x="1111" y="224.4" width="12" height="11"/><rect x="1131" y="224.4" width="12" height="11"/></g>
   <g fill="none" stroke="#6a6a6a" stroke-width="1"><rect x="1091.5" y="224.9" width="11" height="10"/><rect x="1111.5" y="224.9" width="11" height="10"/><rect x="1131.5" y="224.9" width="11" height="10"/></g><g fill="#b4b4b4"><path d="M1095.4 225.4h3.2l2.8 9h-8.8z"/><path d="M1116.6 225.4h2.6l2.4 9h-7.6z"/><path d="M1136.4 225.4h2.6l1.8 9h-7z"/></g>
   <path d="M1157 224h8.4v11h-6.6v-2.2h-1.8z"/><path d="M1157 233.6h1.4v1.4z"/>
   <path d="M1176.4 226h10v1.2h-0.8v7.8h-8.4v-7.8h-0.8z M1179.4 224.4h4v1.2h-4z"/>
 </svg>
 <!-- ruler type cells -->
 <div class="a" style="left:5px;top:236px;width:160px;height:20px;background:#1b1b1b"></div>
 <div class="sb" style="left:165px;top:210px;width:11px;height:46px;background:#303030"></div>
 <div class="sbb up" style="left:165px;top:210px"></div>
 <div class="sbb dn" style="left:165px;top:242px"></div>
 <svg style="left:0;top:208px" width="170" height="30" viewBox="1012 244 170 30" fill="none" stroke="#fff" stroke-width="0.9">
   <g fill="#454545" stroke="#333" stroke-width="1"><rect x="1018.5" y="246.5" width="23" height="23"/><rect x="1045.5" y="246.5" width="23" height="23"/><rect x="1071.5" y="246.5" width="24" height="23" fill="#265a74" stroke="#9cc4d8"/><rect x="1098.5" y="246.5" width="23" height="23"/><rect x="1125.5" y="246.5" width="23" height="23"/><rect x="1152.5" y="246.5" width="23" height="23"/></g>
   <g stroke="#555" stroke-width="1" ><rect x="1019.5" y="247.5" width="21" height="21"/><rect x="1046.5" y="247.5" width="21" height="21"/><rect x="1099.5" y="247.5" width="21" height="21"/><rect x="1126.5" y="247.5" width="21" height="21"/><rect x="1153.5" y="247.5" width="21" height="21"/></g>
   <path d="M1020 253.6l20-5M1020 256.8l20-5M1020 260l20-5M1020 263.2l20-5M1020 266.4l20-5M1020 269.4l20-5"/>
   <path d="M1047 267l6-19M1049 268l12-20M1052 268l15-18M1056 268l11-10M1060 268l7-5M1047 260l3-12"/>
   <circle cx="1083.5" cy="258" r="8.6"/><circle cx="1083.5" cy="258" r="5.8"/><circle cx="1083.5" cy="258" r="3"/>
   <g id="persp"><path d="M1102.4 248v19l15-10.4z M1102.4 251.6l9.6 1.8 M1102.4 255l13 0.8 M1102.4 258.6l11.6 -0.6 M1102.4 262l7-1.4 M1105.6 249.8v15.4 M1108.8 251.6v11.6 M1112 253.4v7.6" /></g>
   <use href="#persp" x="27"/><use href="#persp" x="54"/>
 </svg>
 <span class="t w" style="left:104px;top:222px;font-size:9.5px;font-weight:bold">1</span>
 <span class="t w" style="left:131px;top:222px;font-size:9.5px;font-weight:bold">2</span>
 <span class="t w" style="left:158px;top:222px;font-size:9.5px;font-weight:bold">3</span>

 <!-- layer panel -->
 <i class="a" style="left:0;top:263px;width:188px;height:2px;background:#222"></i>
 <div class="hdr" style="left:4px;top:266px;width:175px"><span class="tab" style="left:0;color:#fff">图层</span><span class="tab off" style="left:28px">选择范围</span><span class="hm"><i></i><i></i><i></i></span></div>
 <div class="a" style="left:5px;top:283px;width:93px;height:19px;background:#222;border:1px solid #e8e8e8"><span class="t" style="left:2px;top:4px;font-size:10px;color:#eee">标准</span><i class="a" style="right:0;top:0;width:6px;height:17px;background:#3a3a3a"></i><svg style="right:0px;top:6px" width="6" height="5" viewBox="0 0 6 5"><path d="M0 0h6L3 4z" fill="#eee"/></svg></div>
 <svg style="left:120px;top:284px" width="60" height="16" viewBox="1132 320 60 16" fill="#fff">
   <rect x="1134.6" y="322.4" width="8.4" height="8.4" fill="#ddd"/><path d="M1134.6 322.4h2.8v2.8h-2.8z M1140.2 322.4h2.8v2.8h-2.8z M1137.4 325.2h2.8v2.8h-2.8z M1134.6 328h2.8v2.8h-2.8z" fill="#777"/>
   <rect x="1140.4" y="329.4" width="6" height="4.6"/><path d="M1141.6 329.4v-1.4c0-2.4 3.6-2.4 3.6 0v1.4" fill="none" stroke="#fff" stroke-width="1"/>
   <path d="M1156.4 328.4l4.6-2.4l4.6 2.4l-4.6 2.4z" fill="#fff" stroke="#fff" stroke-width="1.2" stroke-linejoin="round"/><path d="M1159 328.4l2-1l2 1l-2 1z" fill="#454545"/><path d="M1156 331.2l5 2.6l5-2.6" fill="none" stroke="#fff" stroke-width="1.2"/>
   <rect x="1176" y="327.6" width="10.4" height="7"/><path d="M1178.2 327.8v-2c0-4 6-4 6 0v2" fill="none" stroke="#fff" stroke-width="1.5"/>
 </svg>
 <div class="a" style="left:8px;top:307px;width:122px;height:14.5px;background:linear-gradient(to right,#c4e2f2,#2a607e);border-bottom:1px solid #333"><span class="t" style="right:3px;top:1px;font-size:10px;color:#fff">不透明度</span></div>
 <div class="box" style="left:138px;top:308px;width:28px;height:14px">100</div>
 <span class="t" style="left:168px;top:309px;font-size:10.5px">%</span>
 <!-- layer list -->
 <div class="a" style="left:5px;top:328px;width:160px;height:302px;background:#1b1b1b"></div>
 <div class="a" style="left:5px;top:328px;width:13px;height:27px;background:#4a4a4a;border-right:1px solid #333"></div>
 <div class="a" style="left:18px;top:328px;width:14px;height:27px;background:#4a4a4a"></div>
 <div class="a blue" style="left:32px;top:328px;width:133px;height:27px"></div>
 <div class="a" style="left:35px;top:332px;width:23px;height:17.5px;background:#000;border:1px solid #e0e0e0"></div>
 <span class="t w" style="left:61px;top:330px;font-size:10px">图层1</span>
 <span class="t w" style="left:61px;top:342px;font-size:10px">100% 标准</span>
 <svg style="left:7px;top:336px" width="24" height="12" viewBox="0 0 24 12"><circle cx="4.4" cy="5.6" r="2.6" fill="none" stroke="#e8e8e8" stroke-width="0.9"/><circle cx="4.4" cy="5.6" r="1" fill="#e8e8e8"/><path d="M21.6 1.6l1.8 1.8l-5.4 5.4l-2.4 0.6l0.6-2.4z" fill="#fff"/></svg>
 <svg style="left:149px;top:335px" width="12" height="12" viewBox="-6 -6 12 12"><g fill="#fff"><circle r="3.6"/><use href="#gt"/><use href="#gt" transform="rotate(45)"/><use href="#gt" transform="rotate(90)"/><use href="#gt" transform="rotate(135)"/></g><circle r="1.5" fill="#265a74"/></svg>
 <div class="sb" style="left:165px;top:328px;width:11px;height:302px;background:#303030"></div>
 <div class="sbb up" style="left:165px;top:328px;height:14px"></div>
 <div class="sbb dn" style="left:165px;top:616px;height:14px"></div>
 <svg style="left:102px;top:637px" width="82" height="16" viewBox="1114 673 82 16" fill="#fff">
   <path d="M1116.6 675.6h7.8v11h-6v-2.2h-1.8z"/><path d="M1116.6 685.2h1.4v1.4z"/>
   <path d="M1134.6 677h4l1 1.4h6v8h-11z"/>
   <rect x="1155" y="676.6" width="12" height="10"/><circle cx="1161" cy="681.6" r="2.8" fill="#454545"/>
   <path d="M1176.4 677.6h10v1.2h-0.8v7.8h-8.4v-7.8h-0.8z M1179.4 676h4v1.2h-4z" fill="#8a8a8a"/>
 </svg>
</div>

</div>
</body>
</html>
